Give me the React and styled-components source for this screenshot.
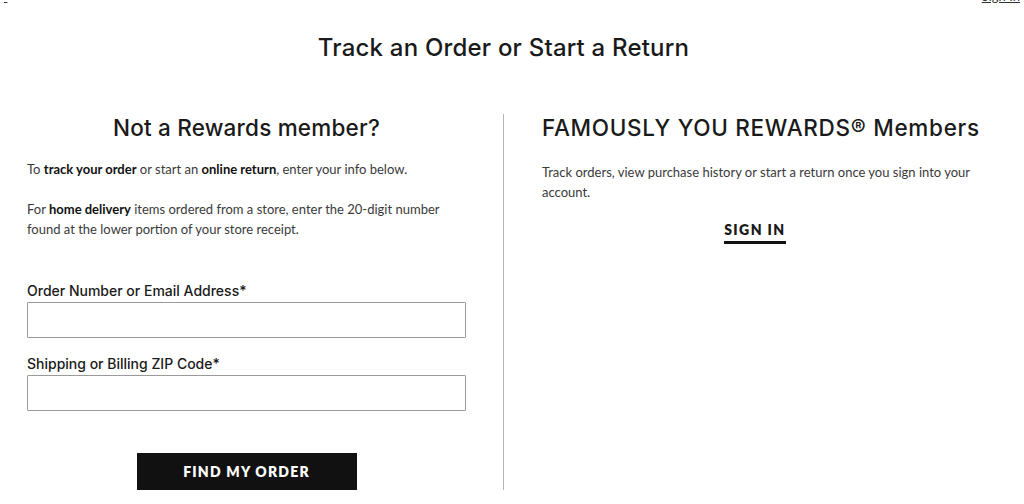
import React from "react";
import styled, { createGlobalStyle } from "styled-components";

const Global = createGlobalStyle`
  html, body { margin: 0; padding: 0; background: #fff; }
  body { font-family: Lato, "Noto Sans", Arial, sans-serif; color: #1a1a1a; }
  * { box-sizing: border-box; }
`;

const TopBar = styled.div`
  height: 4px;
  overflow: hidden;
  display: flex;
  justify-content: space-between;
  align-items: flex-end;
  padding: 0 4px 0 4px;
`;

const TopLink = styled.a`
  font-size: 13px;
  line-height: 13px;
  color: #333;
  text-decoration: underline;
  margin-bottom: 1px;
`;

const Title = styled.h1`
  margin: 28px 0 0;
  padding-right: 17px;
  text-align: center;
  font-family: Inter, Lato, sans-serif;
  font-size: 24px;
  line-height: 32px;
  font-weight: 500;
  letter-spacing: 0.2px;
  color: #1a1a1a;
`;

const Columns = styled.div`
  display: grid;
  grid-template-columns: 503px 1px 1fr;
  margin-top: 50px;
`;

const Column = styled.section`
  padding: ${(p) => (p.$right ? "0 53px 0 38px" : "0 37px 0 27px")};
`;

const Divider = styled.div`
  background: #b5b5b5;
  width: 1px;
  height: 376px;
`;

const Heading = styled.h2`
  margin: 0;
  text-align: center;
  font-family: Inter, Lato, sans-serif;
  font-size: 22.5px;
  line-height: 28px;
  font-weight: 500;
  letter-spacing: ${(p) => (p.$wide ? "0.7px" : "0.2px")};
  white-space: nowrap;
  color: #1a1a1a;
`;

const Para = styled.p`
  margin: ${(p) => p.$mt || "18px"} 0 0;
  font-size: 13px;
  line-height: 20px;
  color: #3a3a3a;
  b { color: #111; font-weight: 700; }
`;

const Form = styled.form`
  margin-top: 43px;
  display: flex;
  flex-direction: column;
`;

const Label = styled.label`
  font-family: Inter, Lato, sans-serif;
  font-size: 14px;
  line-height: 18px;
  font-weight: 500;
  color: #1a1a1a;
  margin-top: ${(p) => p.$mt || "0"};
`;

const Input = styled.input`
  margin-top: 2px;
  width: 439px;
  height: 36px;
  border: 1px solid #9a9a9a;
  border-radius: 1px;
  background: #fff;
  font: inherit;
`;

const Button = styled.button`
  align-self: center;
  margin-top: 42px;
  width: 220px;
  height: 37px;
  background: #111;
  color: #fff;
  border: none;
  font-family: Lato, Arial, sans-serif;
  font-size: 14px;
  font-weight: 800;
  letter-spacing: 1.2px;
  text-transform: uppercase;
`;

const SignInRow = styled.div`
  display: flex;
  justify-content: center;
  margin-top: 19px;
  padding-right: 12px;
`;

const SignIn = styled.a`
  font-size: 14px;
  font-weight: 800;
  letter-spacing: 1.4px;
  color: #1a1a1a;
  padding-bottom: 2px;
  border-bottom: 3px solid #111;
  line-height: 18px;
`;

export default function App() {
  return (
    <>
      <Global />
      <TopBar>
        <TopLink>·</TopLink>
        <TopLink>Sign In</TopLink>
      </TopBar>
      <Title>Track an Order or Start a Return</Title>
      <Columns>
        <Column>
          <Heading>Not a Rewards member?</Heading>
          <Para $mt="17px">
            To <b>track your order</b> or start an <b>online return</b>, enter your info below.
          </Para>
          <Para $mt="20px">
            For <b>home delivery</b> items ordered from a store, enter the 20-digit number found at the lower portion of your store receipt.
          </Para>
          <Form onSubmit={(e) => e.preventDefault()}>
            <Label htmlFor="order">Order Number or Email Address*</Label>
            <Input id="order" type="text" />
            <Label htmlFor="zip" $mt="17px">Shipping or Billing ZIP Code*</Label>
            <Input id="zip" type="text" />
            <Button type="submit">Find My Order</Button>
          </Form>
        </Column>
        <Divider />
        <Column $right>
          <Heading $wide>FAMOUSLY YOU REWARDS® Members</Heading>
          <Para $mt="20px">
            Track orders, view purchase history or start a return once you sign into your account.
          </Para>
          <SignInRow>
            <SignIn>SIGN IN</SignIn>
          </SignInRow>
        </Column>
      </Columns>
    </>
  );
}
